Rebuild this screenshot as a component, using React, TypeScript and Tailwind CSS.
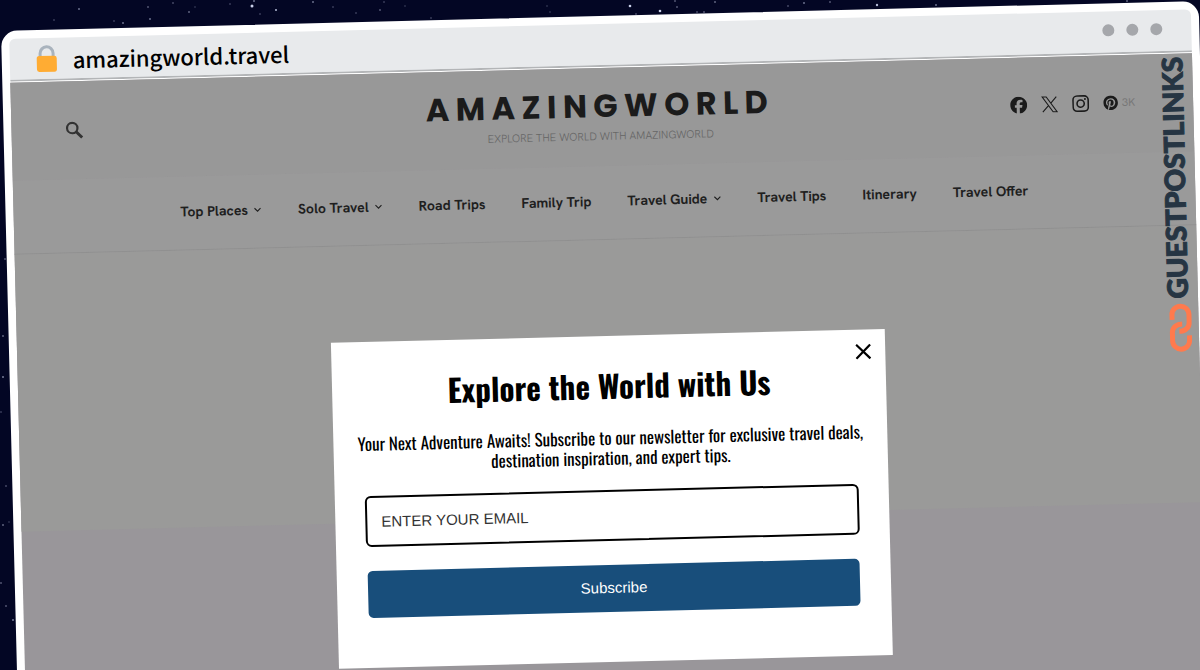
import { FaFacebook, FaPinterest } from "react-icons/fa6";

const stars: [number, number, number, number][] = [
  [79, 9, 0.8, 0.8], [54, 20, 0.8, 0.4], [148, 7, 0.8, 0.6], [173, 3, 0.8, 0.5], [189, 12, 0.8, 0.7],
  [150, 19, 0.8, 0.8], [123, 23, 0.8, 0.8], [114, 21, 0.8, 0.4], [230, 4, 0.8, 0.4], [252, 6, 1.5, 0.9],
  [254, 1, 0.8, 0.8], [276, 10, 1, 0.8], [260, 14, 0.8, 0.4], [195, 7, 0.8, 0.3], [313, 2, 0.8, 0.8],
  [333, 7, 0.8, 0.4], [356, 13, 0.8, 0.4], [380, 10, 0.8, 0.6], [384, 2, 0.8, 0.4], [405, 6, 0.8, 0.3],
  [431, 18, 0.8, 0.4], [547, 6, 0.8, 0.3], [550, 12, 0.8, 0.3], [630, 6, 1.3, 0.9], [660, 11, 1.3, 0.9],
  [636, 14, 0.8, 0.5], [675, 1, 0.8, 0.6], [677, 7, 0.8, 0.6], [697, 12, 0.8, 0.5], [704, 12, 0.8, 0.6],
  [715, 2, 0.8, 0.7], [788, 6, 0.8, 0.5], [804, 3, 0.8, 0.8], [830, 2, 0.8, 0.6], [877, 5, 1.2, 0.8],
  [936, 5, 0.8, 0.8], [1127, 1, 0.8, 0.7], [5, 259, 0.8, 0.6], [3, 336, 0.8, 0.7], [3, 377, 0.8, 0.9],
  [1, 412, 0.8, 0.4], [6, 486, 0.8, 0.5], [3, 525, 0.8, 0.7], [9, 522, 0.8, 0.3], [1, 583, 0.8, 0.6],
  [6, 606, 0.8, 0.6], [13, 620, 0.8, 0.9],
];

const nav = [
  { label: "Top Places", menu: true },
  { label: "Solo Travel", menu: true },
  { label: "Road Trips" },
  { label: "Family Trip" },
  { label: "Travel Guide", menu: true },
  { label: "Travel Tips" },
  { label: "Itinerary" },
  { label: "Travel Offer" },
];

function Stars() {
  return (
    <svg className="absolute inset-0 h-full w-full" aria-hidden="true">
      {stars.map(([x, y, r, o]) => (
        <circle key={`${x}-${y}`} cx={x} cy={y} r={r} fill="#dfe6ff" opacity={o} />
      ))}
    </svg>
  );
}

function Lock() {
  return (
    <svg width="22" height="28" viewBox="0 0 22 28" aria-hidden="true">
      <path d="M4.5 13V8.500a6.500 6.500 0 0 1 13 0V13" fill="none" stroke="#a9b3bd" strokeWidth="3" />
      <rect x="1" y="11" width="20" height="16" rx="2.500" fill="#ffac33" />
    </svg>
  );
}

function TitleBar() {
  return (
    <div className="flex h-[43px] items-center justify-between rounded-t-md border-b-2 border-[#b3b5b7] bg-[#e8eaec] pr-[29px] pl-[26px]">
      <div className="flex items-center gap-[15px]">
        <Lock />
        <span className="font-['Noto_Sans_CJK_SC',sans-serif] text-[22px] leading-8 font-medium text-black">
          amazingworld.travel
        </span>
      </div>
      <div className="flex gap-3 pb-1">
        <span className="size-3 rounded-full bg-[#a5a7ab]" />
        <span className="size-3 rounded-full bg-[#a5a7ab]" />
        <span className="size-3 rounded-full bg-[#a5a7ab]" />
      </div>
    </div>
  );
}

function Header() {
  return (
    <header className="grid h-[98px] grid-cols-[1fr_auto_1fr] items-center bg-[#989898] pr-[58px] pl-[54px] text-[#1b1b1b]">
      <button type="button" aria-label="Search" className="justify-self-start">
        <svg width="18" height="18" viewBox="0 0 18 18" fill="none" stroke="#333" aria-hidden="true">
          <circle cx="6.800" cy="6.800" r="5.200" strokeWidth="2.200" />
          <path d="M10.600 10.600L16.500 16.500" strokeWidth="3" />
        </svg>
      </button>
      <div className="text-center">
        <h1 className="font-['Poppins','Lato',sans-serif] text-[32px] leading-9 font-bold tracking-[0.2em]">AMAZINGWORLD</h1>
        <p className="mt-[2px] font-['Hanken_Grotesk','Lato',sans-serif] text-[11px] leading-5 font-light text-[#666]">
          EXPLORE THE WORLD WITH AMAZINGWORLD
        </p>
      </div>
      <div className="flex items-center gap-[14px] justify-self-end pb-1">
        <a href="#facebook" aria-label="Facebook">
          <FaFacebook size={17} />
        </a>
        <a href="#x" aria-label="X">
          <svg width="17" height="17" viewBox="0 0 17 17" fill="none" stroke="currentColor" aria-hidden="true">
            <path d="M1.200 1h4l10.600 15h-4zM15.300 1L9.500 7.500M7.500 9.600L1.500 16" strokeWidth="1.100" />
          </svg>
        </a>
        <a href="#instagram" aria-label="Instagram">
          <svg width="17" height="17" viewBox="0 0 17 17" fill="none" stroke="currentColor" aria-hidden="true">
            <rect x="0.900" y="0.900" width="15.200" height="15.200" rx="4" strokeWidth="1.600" />
            <circle cx="8.500" cy="8.500" r="3.600" strokeWidth="1.600" />
            <circle cx="12.900" cy="4.100" r="1" fill="currentColor" stroke="none" />
          </svg>
        </a>
        <a href="#pinterest" className="flex items-center gap-1">
          <FaPinterest size={15} aria-label="Pinterest" />
          <span className="font-['Hanken_Grotesk','Lato',sans-serif] text-[11px] leading-4 text-[#777]">3K</span>
        </a>
      </div>
    </header>
  );
}

function Nav() {
  return (
    <nav className="flex h-[74px] items-center justify-center gap-[36px] border-b border-[#909090] bg-[#9a9a9a] pb-[3px] font-['Hanken_Grotesk','Lato',sans-serif] text-sm leading-5 font-bold whitespace-nowrap text-[#1f1f1f]">
      {nav.map((item) => (
        <a key={item.label} href="#nav" className="flex items-center gap-[6px]">
          {item.label}
          {item.menu && (
            <svg width="8" height="8" viewBox="0 0 8 8" fill="none" stroke="currentColor" aria-hidden="true">
              <path d="M1 2.500l3 3 3-3" strokeWidth="1.100" />
            </svg>
          )}
        </a>
      ))}
    </nav>
  );
}

function Watermark() {
  return (
    <div className="absolute top-[3px] right-px flex flex-col items-center gap-1">
      <span className="mr-[6px] rotate-180 font-['Lato',sans-serif] text-[28px] leading-7 font-black text-[#263543] [-webkit-text-stroke:1px_#263543] [writing-mode:vertical-rl]">
        GUESTPOSTLINKS
      </span>
      <svg width="24" height="50" viewBox="0 0 24 50" fill="none" stroke="#ff7a4d" strokeWidth="5" aria-hidden="true">
        <path d="M3.500 17V12a8.500 8.500 0 0 1 17 0v8a8.500 8.500 0 0 1-8.500 8.500h-1.500" />
        <path d="M20.500 33v5a8.500 8.500 0 0 1-17 0v-8a8.500 8.500 0 0 1 8.500-8.500h1.500" />
      </svg>
    </div>
  );
}

function Popup() {
  return (
    <div
      role="dialog"
      aria-labelledby="popup-title"
      className="absolute top-[268px] left-1/2 h-[326px] w-[554px] -translate-x-1/2 bg-white px-[30px] pt-[29px] text-black"
    >
      <button type="button" aria-label="Close" className="absolute top-[14px] right-[14px]">
        <svg width="16" height="16" viewBox="0 0 16 16" stroke="#000" strokeWidth="2.200" aria-hidden="true">
          <path d="M1 1l14 14M15 1L1 15" />
        </svg>
      </button>
      <h2
        id="popup-title"
        className="text-center font-['Oswald',sans-serif] text-[31px] leading-10 font-bold"
      >
        Explore the World with Us
      </h2>
      <p className="-mx-2 mt-[23px] text-center font-['Oswald',sans-serif] text-[17px] leading-5 whitespace-nowrap">
        Your Next Adventure Awaits! Subscribe to our newsletter for exclusive travel deals,
        <br />
        destination inspiration, and expert tips.
      </p>
      <form className="mt-[22px] font-['Liberation_Sans',sans-serif] text-[15px]" onSubmit={(e) => e.preventDefault()}>
        <input
          type="email"
          aria-label="Email"
          placeholder="ENTER YOUR EMAIL"
          className="block h-[51px] w-full rounded-md border-2 border-black px-[14px] placeholder:text-[#333]"
        />
        <div className="px-px pt-6">
          <button type="submit" className="block h-[47px] w-full rounded-[5px] bg-[#184e7b] text-white">
            Subscribe
          </button>
        </div>
      </form>
    </div>
  );
}

export default function App() {
  return (
    <div className="relative h-screen overflow-hidden bg-[#030624]">
      <Stars />
      <div className="relative mx-px mt-[31px] h-full origin-top-left rotate-[-1.43deg]">
        <div className="flex min-h-[120vh] flex-col rounded-2xl border-8 border-white bg-white">
          <TitleBar />
          <div className="relative mt-px flex grow flex-col bg-[#99969a]">
            <Header />
            <Nav />
            <div className="h-[277px] bg-[#9a9a99]" />
            <Watermark />
            <Popup />
          </div>
        </div>
      </div>
    </div>
  );
}
